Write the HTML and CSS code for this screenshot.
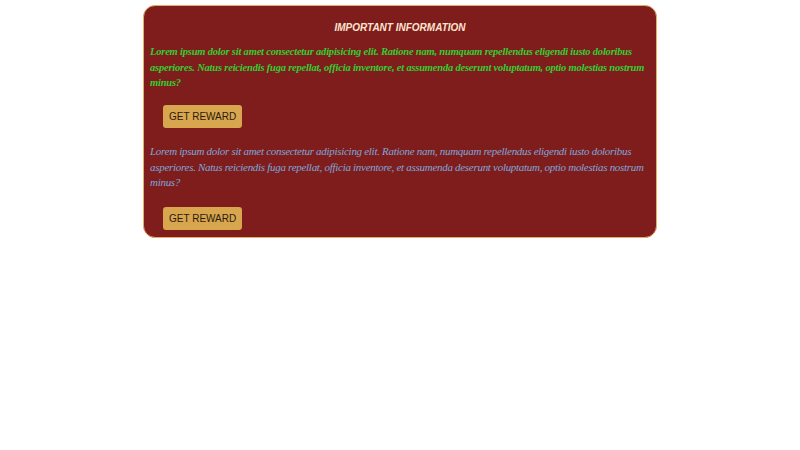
FILE: index.html
```html
<!DOCTYPE html>
<html lang="en">
<head>
<meta charset="utf-8">
<title>Important Information</title>
<link rel="stylesheet" href="styles.css">
</head>
<body>
<div class="card">
  <h2 class="card-title">IMPORTANT INFORMATION</h2>
  <p class="text text-green">Lorem ipsum dolor sit amet consectetur adipisicing elit. Ratione nam, numquam repellendus eligendi iusto doloribus asperiores. Natus reiciendis fuga repellat, officia inventore, et assumenda deserunt voluptatum, optio molestias nostrum minus?</p>
  <button class="btn">GET REWARD</button>
  <p class="text text-blue">Lorem ipsum dolor sit amet consectetur adipisicing elit. Ratione nam, numquam repellendus eligendi iusto doloribus asperiores. Natus reiciendis fuga repellat, officia inventore, et assumenda deserunt voluptatum, optio molestias nostrum minus?</p>
  <button class="btn btn-last">GET REWARD</button>
</div>
</body>
</html>
```
FILE: styles.css
```css
html, body {
  margin: 0;
  padding: 0;
  background: #ffffff;
}
body {
  padding-top: 5px;
}
.card {
  box-sizing: border-box;
  width: 514px;
  margin: 0 auto;
  background: #7f1d1d;
  border: 1px solid #e6ad68;
  border-radius: 12px;
  padding: 12px 6px 7px 6px;
}
.card-title {
  margin: 0 0 6px 0;
  text-align: center;
  font-family: "Liberation Sans", Arial, sans-serif;
  font-size: 10px;
  line-height: 20px;
  font-style: italic;
  font-weight: bold;
  color: #fde4cf;
}
.text {
  margin: 0;
  font-family: "Liberation Serif", "Times New Roman", serif;
  font-size: 11px;
  line-height: 15.5px;
  font-style: italic;
}
.text-green {
  color: #32cd32;
  font-weight: bold;
  font-size: 10.5px;
  letter-spacing: -0.2px;
}
.text-blue {
  color: #7da7d9;
  letter-spacing: -0.29px;
}
.btn {
  display: block;
  margin: 14.5px 0 16px 13px;
  padding: 6px 6px;
  background: #d8a64f;
  color: #2b1a0a;
  border: none;
  border-radius: 3px;
  font-family: "Liberation Sans", Arial, sans-serif;
  font-size: 10px;
  line-height: 11px;
}
.btn-last {
  margin-top: 16px;
  margin-bottom: 0;
}
```
